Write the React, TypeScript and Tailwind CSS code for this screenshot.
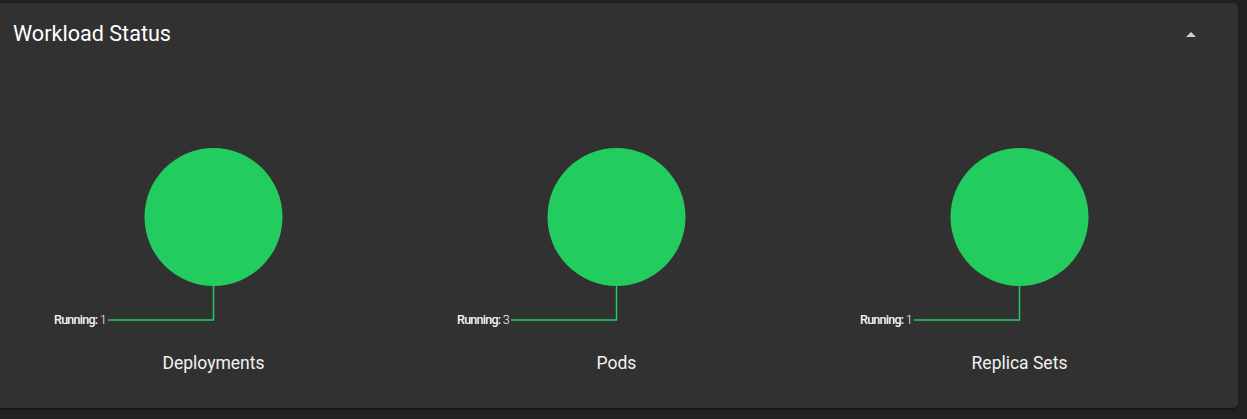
import React from "react";

const items = [
  { name: "Deployments", running: 1 },
  { name: "Pods", running: 3 },
  { name: "Replica Sets", running: 1 },
];

function Chart({ running }: { running: number }) {
  return (
    <svg width={403} height={240} viewBox="0 0 403 240" className="block">
      <circle cx={201.5} cy={117} r={69} fill="#22cc5f" />
      <polyline
        points="201.5,186 201.5,220 96,220"
        fill="none"
        stroke="#22cc5f"
        strokeWidth={1.5}
      />
      <text
        x={94}
        y={221}
        textAnchor="end"
        dominantBaseline="middle"
        fill="#f5f5f5"
        style={{ fontFamily: "Roboto, sans-serif", fontSize: 12.5, letterSpacing: "-0.75px" }}
      >
        <tspan fontWeight={500}>Running:</tspan>
        <tspan fontWeight={300} dx={2.5}>
          {running}
        </tspan>
      </text>
    </svg>
  );
}

export default function App() {
  return (
    <div className="w-[1247px] h-[419px] bg-[#212121] pt-[3px] font-['Roboto',sans-serif]">
      <div className="w-[1238px] h-[405px] bg-[#313131] rounded-br-[5px] rounded-tr-[5px] shadow-[0_1px_2px_rgba(0,0,0,0.5)] flex flex-col">
        <div className="h-[60px] flex items-center pl-[13px] pr-[35px] justify-between">
          <span className="text-[21.6px] leading-[32px] text-white mt-[2px]">Workload Status</span>
          <svg width={24} height={24} viewBox="0 0 24 24" className="mt-[4px]">
            <path d="m7 14 5-5 5 5z" fill="#d0d0d0" />
          </svg>
        </div>
        <div className="flex pl-[12px] mt-[37px]">
          {items.map((it) => (
            <div key={it.name} className="w-[403px] flex flex-col items-center">
              <Chart running={it.running} />
              <div className="mt-[11px] text-[17.5px] leading-[24px] text-[#f2f2f2]">{it.name}</div>
            </div>
          ))}
        </div>
      </div>
    </div>
  );
}
